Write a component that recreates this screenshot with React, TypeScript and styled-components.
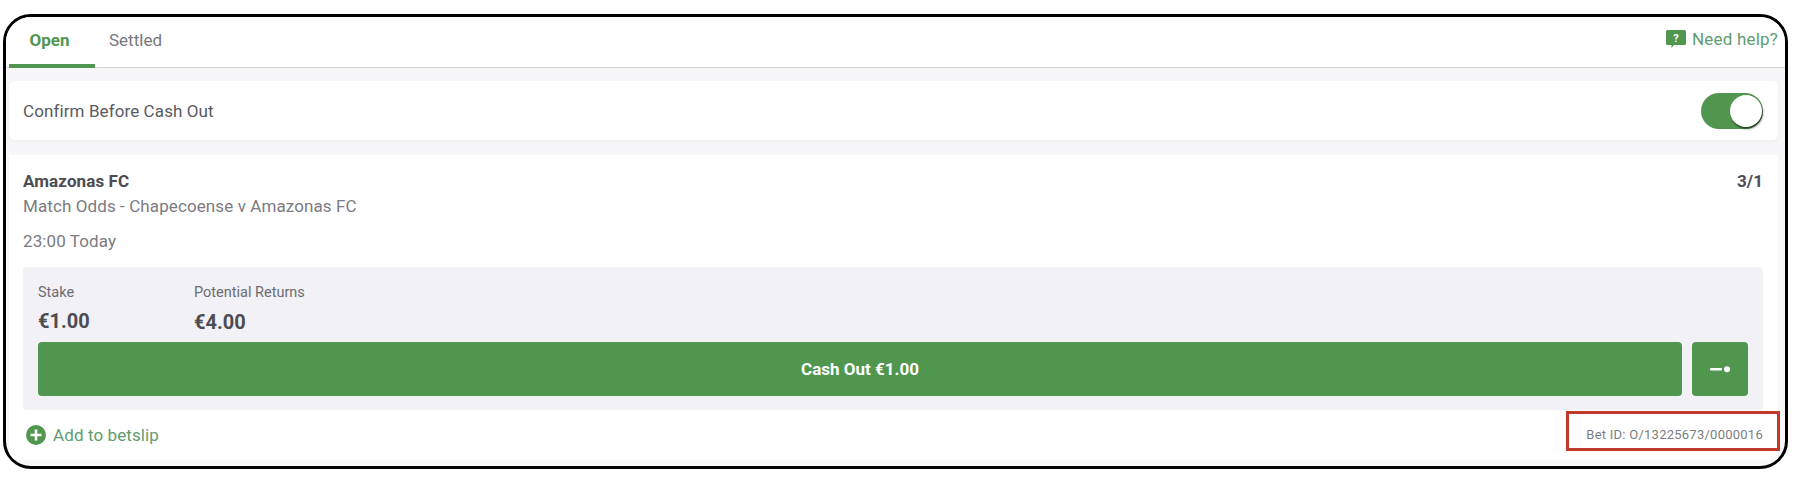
import React from "react";
import styled, { createGlobalStyle } from "styled-components";

const GREEN = "#50964f";

const GlobalStyle = createGlobalStyle`
  html, body {
    margin: 0;
    padding: 0;
    background: #fff;
    font-family: Roboto, "Liberation Sans", sans-serif;
  }
  * { box-sizing: border-box; }
`;

const Page = styled.div`
  width: 1794px;
  height: 492px;
  padding: 14px 6px 0 3px;
`;

const Frame = styled.div`
  height: 455px;
  border: 3px solid #000;
  border-radius: 28px;
  background: #f7f7f9;
  overflow: hidden;
  display: flex;
  flex-direction: column;
`;

const TabBar = styled.div`
  height: 51px;
  flex: none;
  display: flex;
  align-items: stretch;
  padding: 0 7px 0 3px;
  background: #fff;
  border-bottom: 1px solid #d6d6d6;
`;

const Tab = styled.div<{ $active?: boolean }>`
  width: 86px;
  margin-bottom: -1px;
  padding: 0 5px 2px 0;
  display: flex;
  align-items: center;
  justify-content: center;
  font-size: 17px;
  font-weight: ${(props) => (props.$active ? 700 : 400)};
  color: ${(props) => (props.$active ? GREEN : "#77777c")};
  border-bottom: 4px solid ${(props) => (props.$active ? GREEN : "transparent")};
`;

const Help = styled.div`
  margin-left: auto;
  display: flex;
  align-items: center;
  gap: 6px;
  font-size: 17px;
  letter-spacing: 0.2px;
  color: #5f9c70;
  padding-bottom: 7px;
`;

const ConfirmCard = styled.div`
  height: 59px;
  flex: none;
  margin: 13px 7px 15px 3px;
  padding: 0 15px 0 14px;
  display: flex;
  align-items: center;
  justify-content: space-between;
  background: #fff;
  border-radius: 6px;
  font-size: 17px;
  letter-spacing: 0.1px;
  color: #5a5a5f;
  box-shadow: 0 2px 5px rgba(0, 0, 0, 0.04);
`;

const Toggle = styled.div`
  width: 62px;
  height: 36px;
  border-radius: 18px;
  background: ${GREEN};
  position: relative;
`;

const Knob = styled.div`
  position: absolute;
  right: 1px;
  top: 2px;
  width: 32px;
  height: 32px;
  border-radius: 50%;
  background: #fff;
  box-shadow: 1px 2px 2px rgba(0, 0, 0, 0.55);
`;

const BetCard = styled.div`
  flex: 1;
  margin: 0 7px 6px 3px;
  padding: 0 15px 0 14px;
  background: #fff;
  display: flex;
  flex-direction: column;
`;

const TitleRow = styled.div`
  display: flex;
  justify-content: space-between;
  align-items: center;
  height: 18px;
  margin-top: 17px;
  font-size: 17px;
  font-weight: 700;
  letter-spacing: 0.1px;
  color: #4c4c52;
`;

const Market = styled.div`
  margin-top: 7px;
  height: 18px;
  line-height: 18px;
  font-size: 17px;
  letter-spacing: 0.1px;
  color: #7b7b80;
`;

const KickOff = styled(Market)`
  margin-top: 17px;
`;

const Panel = styled.div`
  margin-top: 17px;
  height: 143px;
  flex: none;
  padding: 16px 15px 14px;
  background: #f1f1f6;
  border-radius: 4px;
  display: flex;
  flex-direction: column;
`;

const Figures = styled.div`
  display: flex;
  height: 59px;
  flex: none;
`;

const Figure = styled.div<{ $width: number }>`
  width: ${(props) => props.$width}px;
  display: flex;
  flex-direction: column;
`;

const FigureLabel = styled.span`
  font-size: 14.5px;
  line-height: 20px;
  color: #6c6c71;
`;

const FigureValue = styled.span<{ $offset?: number }>`
  margin-top: ${(props) => props.$offset ?? 6}px;
  font-size: 20px;
  line-height: 24px;
  font-weight: 700;
  color: #4c4c52;
`;

const Actions = styled.div`
  display: flex;
  gap: 10px;
  height: 54px;
`;

const CashOut = styled.button`
  flex: 1;
  border: 0;
  border-radius: 4px;
  background: ${GREEN};
  color: #fff;
  font-family: inherit;
  font-size: 17px;
  font-weight: 700;
`;

const MoreButton = styled.button`
  width: 56px;
  border: 0;
  border-radius: 4px;
  background: ${GREEN};
  display: flex;
  align-items: center;
  justify-content: center;
  padding: 0;
`;

const Footer = styled.div`
  flex: 1;
  display: flex;
  align-items: center;
  justify-content: space-between;
  padding-bottom: 1px;
`;

const AddLink = styled.div`
  display: flex;
  align-items: center;
  gap: 7px;
  margin-left: 3px;
  font-size: 17px;
  letter-spacing: 0.1px;
  color: #5f9c70;
`;

const BetId = styled.div`
  position: relative;
  font-size: 13px;
  letter-spacing: 0.25px;
  color: #7d7d82;

  &::after {
    content: "";
    position: absolute;
    left: -20px;
    right: -17px;
    top: -16px;
    bottom: -9px;
    border: 3px solid #c0392b;
  }
`;

function HelpIcon() {
  return (
    <svg width="20" height="18" viewBox="0 0 20 18">
      <path d="M1.500 0h17A1.500 1.500 0 0 1 20 1.500v12a1.500 1.500 0 0 1-1.500 1.500H8l-2.500 3v-3h-4A1.500 1.500 0 0 1 0 13.500v-12A1.500 1.500 0 0 1 1.500 0z" fill={GREEN} />
      <text x="10" y="12" textAnchor="middle" fontSize="11" fontWeight="700" fill="#fff" fontFamily="Roboto, sans-serif">
        ?
      </text>
    </svg>
  );
}

function PlusIcon() {
  return (
    <svg width="20" height="20" viewBox="0 0 20 20">
      <circle cx="10" cy="10" r="10" fill={GREEN} />
      <path d="M10 4.500v11M4.500 10h11" stroke="#fff" strokeWidth="2.600" />
    </svg>
  );
}

function SliderIcon() {
  return (
    <svg width="20" height="8" viewBox="0 0 20 8">
      <rect x="0" y="3" width="12" height="2.400" rx="1" fill="#fff" />
      <circle cx="17" cy="4.200" r="3" fill="#fff" />
    </svg>
  );
}

export default function App() {
  return (
    <Page>
      <GlobalStyle />
      <Frame>
        <TabBar>
          <Tab $active>Open</Tab>
          <Tab>Settled</Tab>
          <Help>
            <HelpIcon />
            Need help?
          </Help>
        </TabBar>
        <ConfirmCard>
          Confirm Before Cash Out
          <Toggle>
            <Knob />
          </Toggle>
        </ConfirmCard>
        <BetCard>
          <TitleRow>
            Amazonas FC
            <span>3/1</span>
          </TitleRow>
          <Market>Match Odds - Chapecoense v Amazonas FC</Market>
          <KickOff>23:00 Today</KickOff>
          <Panel>
            <Figures>
              <Figure $width={156}>
                <FigureLabel>Stake</FigureLabel>
                <FigureValue>€1.00</FigureValue>
              </Figure>
              <Figure $width={200}>
                <FigureLabel>Potential Returns</FigureLabel>
                <FigureValue $offset={7}>€4.00</FigureValue>
              </Figure>
            </Figures>
            <Actions>
              <CashOut>Cash Out €1.00</CashOut>
              <MoreButton>
                <SliderIcon />
              </MoreButton>
            </Actions>
          </Panel>
          <Footer>
            <AddLink>
              <PlusIcon />
              Add to betslip
            </AddLink>
            <BetId>Bet ID: O/13225673/0000016</BetId>
          </Footer>
        </BetCard>
      </Frame>
    </Page>
  );
}
